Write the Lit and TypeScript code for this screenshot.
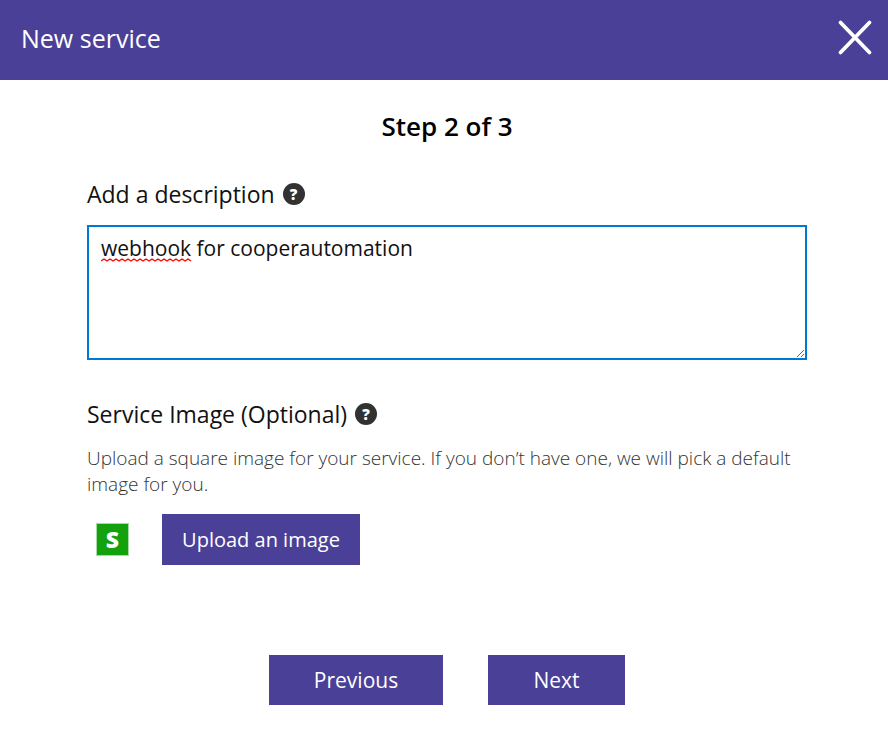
import { LitElement, html, css, svg } from "lit";
import { customElement, property, state } from "lit/decorators.js";

@customElement("help-tip")
export class HelpTip extends LitElement {
  @property() label = "";

  static styles = css`
    :host {
      display: inline-flex;
    }
    .tip {
      width: 22px;
      height: 22px;
      padding: 0;
      border: 0;
      border-radius: 50%;
      background: #323232;
      color: #fff;
      font: 800 15px/22px "Open Sans", "Noto Sans", sans-serif;
      text-align: center;
      cursor: pointer;
    }
  `;

  render() {
    return html`<button class="tip" type="button" aria-label=${this.label}>?</button>`;
  }
}

@customElement("app-root")
export class AppRoot extends LitElement {
  @state() private description = "webhook for cooperautomation";

  static styles = css`
    :host {
      display: block;
      background: #fff;
      color: #111;
      font-family: "Open Sans", "Noto Sans", sans-serif;
    }
    * {
      box-sizing: border-box;
    }
    .header {
      display: flex;
      align-items: center;
      justify-content: space-between;
      height: 80px;
      padding: 0 14px 4px 21px;
      background: #4b4097;
      color: #fff;
    }
    .title {
      margin: 0;
      font-size: 25px;
      font-weight: 400;
      line-height: 36px;
    }
    .close {
      display: flex;
      padding: 0;
      border: 0;
      background: none;
      color: inherit;
      cursor: pointer;
    }
    .form {
      padding: 28px 81px 28px 87px;
    }
    .step {
      margin: 0 0 32px;
      color: #000;
      font-size: 26px;
      font-weight: 600;
      line-height: 36px;
      text-align: center;
    }
    .field-head {
      display: flex;
      align-items: center;
      gap: 8px;
      height: 36px;
      font-size: 23px;
      font-weight: 400;
    }
    .editor {
      position: relative;
      display: flex;
      margin: 13px 0 36px;
    }
    .text {
      width: 100%;
      height: 135px;
      padding: 5px 12px;
      border: 2px solid #0078d4;
      border-radius: 0;
      outline: none;
      background: #fff;
      color: #111;
      font: 400 21px/32px "Open Sans", "Noto Sans", sans-serif;
      resize: vertical;
    }
    .squiggle {
      position: absolute;
      left: 14px;
      top: 33px;
      pointer-events: none;
    }
    .hint {
      margin: 13px 0 17px;
      color: #333;
      font-size: 19px;
      font-weight: 300;
      line-height: 26px;
    }
    .upload {
      display: flex;
      align-items: center;
      gap: 33px;
      padding-left: 9px;
    }
    .avatar {
      width: 33px;
      height: 33px;
      border: 1px solid #a5dca3;
      background: #13a10e;
      color: #fff;
      font-size: 23px;
      font-weight: 800;
      line-height: 30px;
      text-align: center;
    }
    .button {
      height: 50px;
      padding: 0 16px;
      border: 0;
      background: #4b4097;
      color: #fff;
      font: 400 21px/50px "Open Sans", "Noto Sans", sans-serif;
      white-space: nowrap;
      cursor: pointer;
    }
    .pick {
      width: 198px;
      height: 51px;
      font-size: 20px;
    }
    .actions {
      display: flex;
      justify-content: center;
      gap: 45px;
      margin-top: 90px;
    }
    .previous {
      width: 174px;
    }
    .next {
      width: 137px;
    }
  `;

  private squiggle(width: number) {
    let d = "M0 3";
    for (let x = 3, up = true; x <= width; x += 3, up = !up) {
      d += `L${x} ${up ? 1 : 3}`;
    }
    return html`<svg class="squiggle" width=${width} height="4" aria-hidden="true">
      ${svg`<path d=${d} fill="none" stroke="#ff0000" stroke-width="1.4" />`}
    </svg>`;
  }

  render() {
    return html`
      <header class="header">
        <h1 class="title">New service</h1>
        <button class="close" type="button" aria-label="Close">
          <svg width="38" height="38" viewBox="0 0 38 38" aria-hidden="true">
            <path
              d="M4.5 3.5L33.5 33.5M33.5 3.5L4.5 33.5"
              stroke="currentColor"
              stroke-width="3.8"
              stroke-linecap="round"
            />
          </svg>
        </button>
      </header>
      <main class="form">
        <h2 class="step">Step 2 of 3</h2>
        <div class="field-head">
          <label for="description">Add a description</label>
          <help-tip label="About the description"></help-tip>
        </div>
        <div class="editor">
          <textarea
            id="description"
            class="text"
            spellcheck="false"
            .value=${this.description}
            @input=${(e: Event) => {
              this.description = (e.target as HTMLTextAreaElement).value;
            }}
          ></textarea>
          ${this.description.startsWith("webhook") ? this.squiggle(91) : ""}
        </div>
        <div class="field-head">
          <span>Service Image (Optional)</span>
          <help-tip label="About the service image"></help-tip>
        </div>
        <p class="hint">
          Upload a square image for your service. If you don’t have one, we will pick a default
          image for you.
        </p>
        <div class="upload">
          <div class="avatar">S</div>
          <button class="button pick" type="button">Upload an image</button>
        </div>
        <div class="actions">
          <button class="button previous" type="button">Previous</button>
          <button class="button next" type="button">Next</button>
        </div>
      </main>
    `;
  }
}
